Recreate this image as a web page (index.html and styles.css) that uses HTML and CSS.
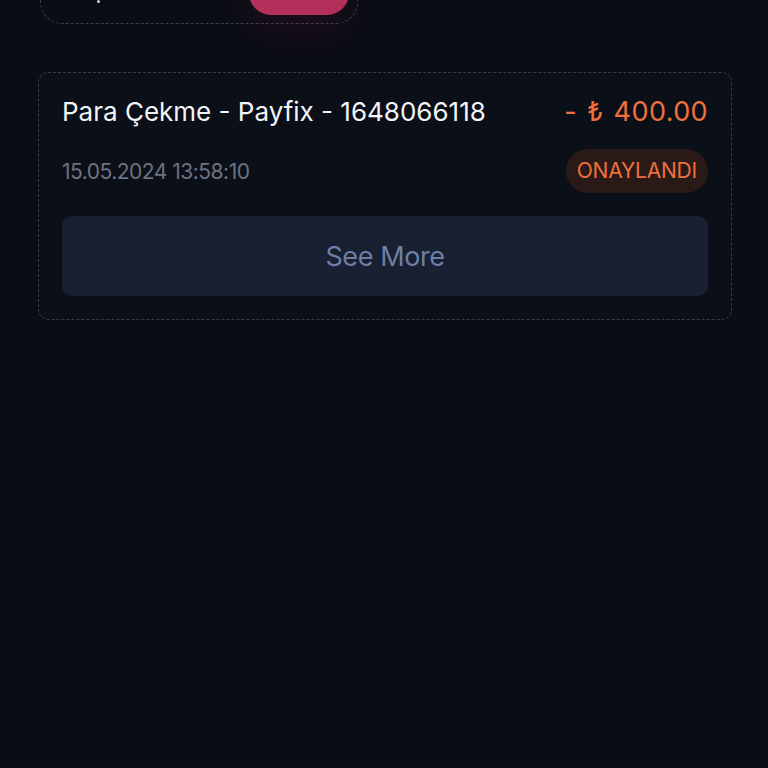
FILE: index.html
```html
<!DOCTYPE html>
<html lang="tr">
<head>
  <meta charset="UTF-8" />
  <meta name="viewport" content="width=device-width, initial-scale=1.0"/>
  <title>İşlemler</title>
  <link rel="stylesheet" href="styles.css">
</head>
<body>

  <div class="page">
    <div class="filter-card">
      <span class="filter-dot"></span>
      <button class="filter-btn" aria-label="Filtrele"></button>
    </div>

    <div class="tx-card">
      <div class="tx-row">
        <div class="tx-title">Para Çekme - Payfix - 1648066118</div>
        <div class="tx-amount">- ₺ 400.00</div>
      </div>
      <div class="tx-row">
        <div class="tx-date">15.05.2024 13:58:10</div>
        <div class="tx-status">ONAYLANDI</div>
      </div>
      <button class="see-more">See More</button>
    </div>
  </div>

</body>
</html>
```

FILE: styles.css
```css
html, body {
  margin: 0;
  padding: 0;
  background: #0a0d15;
  color: #f1f3f7;
  font-family: Inter, "Noto Sans", sans-serif;
  height: 100vh;
  overflow: hidden;
}

.page {
  padding: 0 36px 0 38px;
  margin-top: -80px;
}

.filter-card {
  width: 318px;
  height: 104px;
  margin-left: 2px;
  box-sizing: border-box;
  border: 1.5px dashed #3a3f52;
  border-radius: 22px;
  display: flex;
  align-items: flex-end;
  justify-content: flex-end;
  padding: 0 8px 8px 0;
  position: relative;
}

.filter-dot {
  position: absolute;
  left: 56px;
  bottom: 20px;
  width: 3px;
  height: 3px;
  border-radius: 50%;
  background: #d0d4de;
}

.filter-btn {
  width: 100px;
  height: 60px;
  border: none;
  border-radius: 22px;
  background: #b3305a;
  box-shadow: 0 16px 40px rgba(150, 30, 70, 0.15);
}

.tx-card {
  margin-top: 48px;
  border: 1px dashed #363c4e;
  border-radius: 10px;
  background: #0b0f18;
  padding: 23px;
  display: flex;
  flex-direction: column;
}

.tx-row {
  display: flex;
  justify-content: space-between;
  align-items: center;
}

.tx-row + .tx-row {
  margin-top: 21px;
}

.tx-title {
  font-size: 26px;
  line-height: 32px;
  color: #f3f4f7;
}

.tx-amount {
  font-size: 27px;
  line-height: 32px;
  letter-spacing: 0.4px;
  word-spacing: 2px;
  color: #f0703d;
}

.tx-date {
  font-size: 21px;
  color: #6c7281;
  letter-spacing: -0.5px;
}

.tx-status {
  height: 44px;
  line-height: 44px;
  padding: 0 11px;
  border-radius: 22px;
  background: #2a1a17;
  color: #f0703d;
  font-size: 21px;
  letter-spacing: -0.2px;
}

.see-more {
  margin-top: 23px;
  height: 80px;
  border: none;
  border-radius: 10px;
  background: #182031;
  color: #6d7fa5;
  font-family: inherit;
  font-size: 27px;
  letter-spacing: -0.4px;
  cursor: pointer;
}
```
